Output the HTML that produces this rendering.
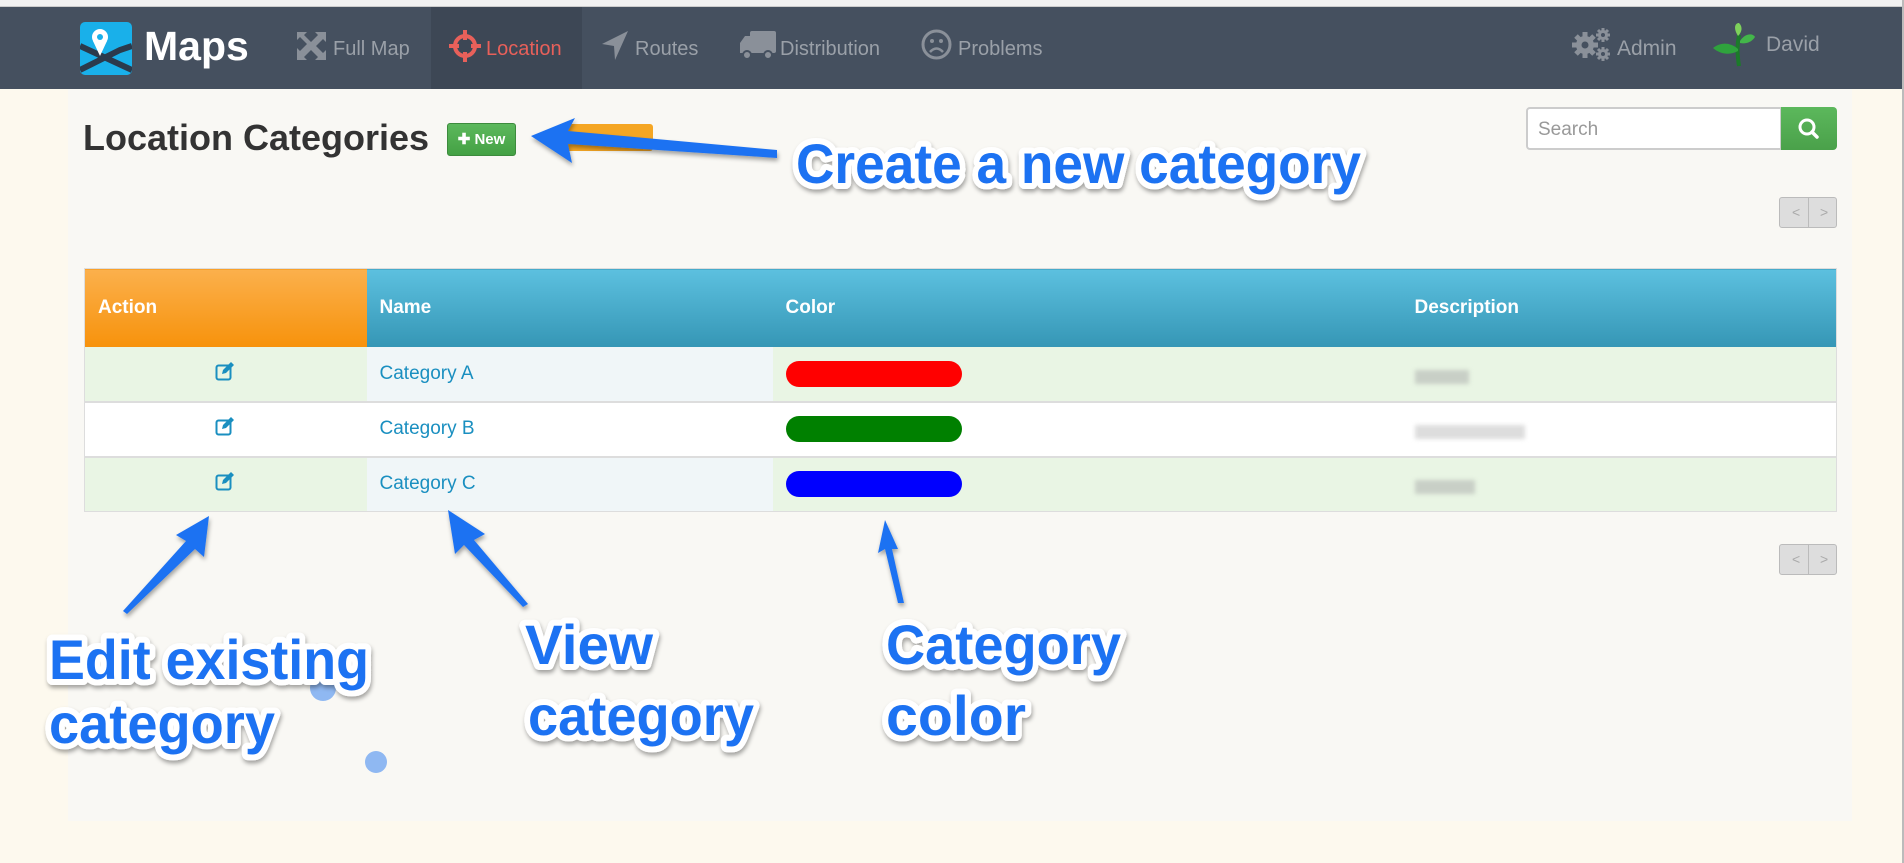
<!DOCTYPE html>
<html><head><meta charset="utf-8"><style>
*{margin:0;padding:0;box-sizing:border-box}
body{width:1904px;height:863px;overflow:hidden;background:#fdf9ee;font-family:"Liberation Sans",sans-serif;position:relative}
.top{position:absolute;left:0;top:0;width:1904px;height:7px;background:#f1f1f1;border-bottom:1px solid #ccc}
.nav{position:absolute;left:0;top:7px;width:1902px;height:82px;background:#45505f}
.rb{position:absolute;right:0;top:0;width:2px;height:863px;background:#bbb}
.panel{position:absolute;left:68px;top:89px;width:1784px;height:732px;background:#f9f8f4}
.a{position:absolute;color:#9aa0a8;font-size:20px;top:38px}
.t{position:absolute;}
table{position:absolute;left:84px;top:268px;width:1753px;border-collapse:collapse;font-size:19px;border:1px solid #ddd}
th{color:#fff;text-align:left;font-weight:bold;height:78px;padding-left:13px;background:linear-gradient(#5cc0df,#3596b5)}
th.o{background:linear-gradient(#fbb04c,#f7920b)}
td{height:55px;padding-left:13px;color:#1a8fc0;border-bottom:2px solid #ddd}
tr.g td{background:#e9f5e4}
tr.w td{background:#fff}
tr td.n{background:#f0f6f8}
.bar{width:176px;height:26px;border-radius:13px}
.blur{height:14px;background:#c8cfc6;filter:blur(2px);margin-top:6px}
.pg{position:absolute;width:58px;height:31px;border:1px solid #bbb;border-radius:3px;background:#ddd;color:#aaa;font-size:14px}
.pg span{position:absolute;top:6px}
</style></head><body>
<div class="top"></div>
<div class="nav"></div>
<div class="panel"></div>
<div class="rb"></div>
<div style="position:absolute;left:431px;top:7px;width:151px;height:82px;background:#3d4755"></div>
<svg style="position:absolute;left:80px;top:22px" width="52" height="53" viewBox="0 0 52 53">
<rect width="52" height="53" rx="5" fill="#19b0ea"/>
<path d="M0 24 L52 48 M0 48 L40 28 L52 24" stroke="#2b3a4c" stroke-width="6" fill="none"/>
<circle cx="20" cy="15" r="8" fill="#fff"/><circle cx="20" cy="15" r="3" fill="#19b0ea"/><path d="M13 19 L20 34 L27 19Z" fill="#fff"/>
</svg>
<div class="t" style="left:144px;top:23px;color:#fff;font-weight:bold;font-size:41px">Maps</div>
<svg class="t" style="left:295px;top:30px" width="33" height="30" viewBox="0 0 33 30"><path d="M2 2h10l-3 3 7 7 7-7-3-3h11v10l-3-3-7 7 7 7 3-3v10H20l3-3-7-7-7 7 3 3H2V18l3 3 7-7-7-7-3 3z" fill="#8a9099"/></svg>
<div class="a" style="left:333px">Full Map</div>
<svg class="t" style="left:449px;top:30px" width="32" height="32" viewBox="0 0 32 32"><circle cx="16" cy="16" r="10" stroke="#e8605a" stroke-width="4" fill="none"/><path d="M16 0v10M16 22v10M0 16h10M22 16h10" stroke="#e8605a" stroke-width="4"/></svg>
<div class="a" style="left:486px;color:#e8605a">Location</div>
<svg class="t" style="left:602px;top:31px" width="26" height="29" viewBox="0 0 26 29"><path d="M26 0 L0 13 L12 15 L13 29Z" fill="#8a9099"/></svg>
<div class="a" style="left:635px">Routes</div>
<svg class="t" style="left:740px;top:31px" width="36" height="29" viewBox="0 0 36 29"><rect x="10" y="0" width="26" height="22" rx="2" fill="#8a9099"/><path d="M0 22V12l5-7h6v17z" fill="#8a9099"/><circle cx="7" cy="24" r="4" fill="#8a9099" stroke="#45505f" stroke-width="2"/><circle cx="28" cy="24" r="4" fill="#8a9099" stroke="#45505f" stroke-width="2"/></svg>
<div class="a" style="left:780px">Distribution</div>
<svg class="t" style="left:921px;top:29px" width="31" height="31" viewBox="0 0 31 31"><circle cx="15.5" cy="15.5" r="13.5" stroke="#8a9099" stroke-width="3" fill="none"/><circle cx="11" cy="12" r="2" fill="#8a9099"/><circle cx="20" cy="12" r="2" fill="#8a9099"/><path d="M9 23q6.5-7 13 0" stroke="#8a9099" stroke-width="2.5" fill="none"/></svg>
<div class="a" style="left:958px">Problems</div>
<svg class="t" style="left:1572px;top:26px" width="40" height="36" viewBox="0 0 40 36">
<g fill="#8a9099">
<circle cx="13" cy="19" r="9"/>
<g stroke="#8a9099" stroke-width="5"><path d="M13 6v26M0 19h26M4 10l18 18M22 10L4 28"/></g>
<circle cx="31" cy="9" r="5"/><g stroke="#8a9099" stroke-width="3"><path d="M31 2v14M24 9h14M26 4l10 10M36 4L26 14"/></g>
<circle cx="31" cy="28" r="5"/><g stroke="#8a9099" stroke-width="3"><path d="M31 21v14M24 28h14M26 23l10 10M36 23L26 33"/></g>
</g>
<circle cx="13" cy="19" r="3.5" fill="#45505f"/><circle cx="31" cy="9" r="2" fill="#45505f"/><circle cx="31" cy="28" r="2" fill="#45505f"/>
</svg>
<div class="a" style="left:1617px;top:37px;font-size:21px">Admin</div>
<svg class="t" style="left:1713px;top:23px" width="42" height="44" viewBox="0 0 42 44"><path d="M26 43 C24 30 24 22 26 12" stroke="#1c7a2a" stroke-width="4" fill="none"/><path d="M25 26 C16 18 6 20 0 25 C8 32 18 32 25 28Z" fill="#2fa33d"/><path d="M27 18 C32 10 40 10 42 14 C38 20 32 21 27 20Z" fill="#43b64a"/><path d="M25 13 C20 5 22 0 26 0 C30 4 29 9 25 13Z" fill="#7ed25b"/></svg>
<div class="a" style="left:1766px;top:33px;font-size:21px">David</div>
<div class="t" style="left:83px;top:117px;font-size:36px;font-weight:bold;color:#333">Location Categories</div>
<div class="t" style="left:561px;top:124px;width:92px;height:27px;background:#f5a623;border-radius:3px"></div>
<div class="t" style="left:447px;top:123px;width:69px;height:33px;background:linear-gradient(#5cb85c,#44a144);border:1px solid #3d8b3d;border-radius:3px;color:#fff;font-size:15px;font-weight:bold;text-align:center;line-height:31px">✚ New</div>
<div class="t" style="left:1526px;top:107px;width:256px;height:43px;background:#fff;border:2px solid #ccc;border-radius:4px 0 0 4px;color:#999;font-size:19px;padding:10px 10px">Search</div>
<div class="t" style="left:1781px;top:107px;width:56px;height:43px;background:linear-gradient(#5cb85c,#4aa14a);border-radius:0 4px 4px 0"><svg width="56" height="43"><circle cx="26" cy="20" r="7" stroke="#fff" stroke-width="3" fill="none"/><path d="M31 25l5 5" stroke="#fff" stroke-width="3.5" stroke-linecap="round"/></svg></div>
<div class="pg" style="left:1779px;top:197px"><span style="left:12px">&lt;</span><span style="left:40px">&gt;</span><div style="position:absolute;left:28px;top:0;width:1px;height:29px;background:#bbb"></div></div>
<div class="pg" style="left:1779px;top:544px"><span style="left:12px">&lt;</span><span style="left:40px">&gt;</span><div style="position:absolute;left:28px;top:0;width:1px;height:29px;background:#bbb"></div></div>
<table>
<tr><th class="o" style="width:282px">Action</th><th style="width:406px">Name</th><th style="width:629px">Color</th><th>Description</th></tr>
<tr class="g"><td style="text-align:center;padding:0"><svg width="22" height="20" viewBox="0 0 22 20"><rect x="1.5" y="4.5" width="14" height="14" rx="2" fill="none" stroke="#1a8fc0" stroke-width="2"/><path d="M7 13l1-4 8-8 3 3-8 8z" fill="#1a8fc0"/></svg></td><td class="n">Category A</td><td><div class="bar" style="background:#f00"></div></td><td><div class="blur" style="width:54px"></div></td></tr>
<tr class="w"><td style="text-align:center;padding:0"><svg width="22" height="20" viewBox="0 0 22 20"><rect x="1.5" y="4.5" width="14" height="14" rx="2" fill="none" stroke="#1a8fc0" stroke-width="2"/><path d="M7 13l1-4 8-8 3 3-8 8z" fill="#1a8fc0"/></svg></td><td class="n" style="background:#fff">Category B</td><td><div class="bar" style="background:#008000"></div></td><td><div class="blur" style="width:110px;background:#ddd"></div></td></tr>
<tr class="g"><td style="text-align:center;padding:0;border:0"><svg width="22" height="20" viewBox="0 0 22 20"><rect x="1.5" y="4.5" width="14" height="14" rx="2" fill="none" stroke="#1a8fc0" stroke-width="2"/><path d="M7 13l1-4 8-8 3 3-8 8z" fill="#1a8fc0"/></svg></td><td class="n" style="border:0">Category C</td><td style="border:0"><div class="bar" style="background:#00f"></div></td><td style="border:0"><div class="blur" style="width:60px"></div></td></tr>
</table>
<svg style="position:absolute;left:0;top:0" width="1904" height="863">
<defs><filter id="s"><feDropShadow dx="1" dy="3" stdDeviation="2" flood-opacity="0.35"/></filter></defs>
<circle cx="323" cy="688" r="13" fill="#8fb8f2"/><circle cx="376" cy="762" r="11" fill="#8fb8f2"/>
<g fill="#1f72f2" filter="url(#s)">
<path d="M531 136 L575 118 L568 131 L777 150 L777 158 L568 144 L572 163 Z"/>
<path d="M209 516 L204 557 L195 549 L127 614 L123 611 L186 541 L176 535 Z"/>
<path d="M448 510 L485 534 L474 540 L528 604 L523 607 L464 545 L455 554 Z"/>
<path d="M885 520 L898 549 L892 549 L904 603 L898 603 L885 549 L878 553 Z"/>
</g>
<g font-family="Liberation Sans, sans-serif" font-weight="bold" font-size="56" fill="#1f72f2" stroke="#fff" stroke-width="12" paint-order="stroke" stroke-linejoin="round" filter="url(#s)">
<text x="796" y="183" textLength="565" lengthAdjust="spacingAndGlyphs">Create a new category</text>
<text x="49" y="679" textLength="320" lengthAdjust="spacingAndGlyphs">Edit existing</text>
<text x="49" y="743" textLength="226" lengthAdjust="spacingAndGlyphs">category</text>
<text x="525" y="664" textLength="128" lengthAdjust="spacingAndGlyphs">View</text>
<text x="528" y="735" textLength="226" lengthAdjust="spacingAndGlyphs">category</text>
<text x="886" y="664" textLength="235" lengthAdjust="spacingAndGlyphs">Category</text>
<text x="886" y="735" textLength="140" lengthAdjust="spacingAndGlyphs">color</text>
</g>
</svg>
</body></html>
